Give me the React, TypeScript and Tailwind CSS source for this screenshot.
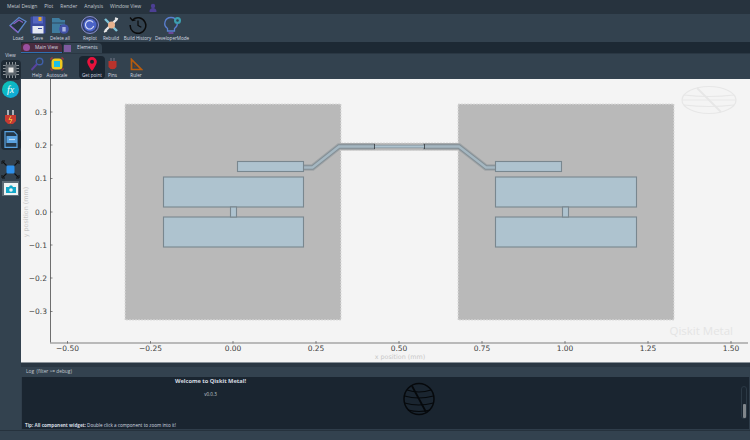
import React from "react";

const Tool = ({ label, children, w, active }: { label: string; children: React.ReactNode; w: string; active?: boolean }) => (
  <div className={`flex flex-col items-center justify-end shrink-0 ${w} ${active ? "bg-[#1a2530] rounded-sm" : ""}`}>
    <div className="flex items-center justify-center">{children}</div>
    <span className="text-[4.6px] leading-[7px] mt-[1px] text-[#d5dbe0] whitespace-nowrap">{label}</span>
  </div>
);

const Plot = () => {
  const xt = [["\u22120.50", 67.5], ["\u22120.25", 150.5], ["0.00", 233], ["0.25", 316], ["0.50", 399], ["0.75", 482], ["1.00", 565], ["1.25", 648], ["1.50", 731]] as const;
  const yt = [["0.3", 112], ["0.2", 145], ["0.1", 178.5], ["0.0", 212], ["\u22120.1", 245], ["\u22120.2", 278], ["\u22120.3", 311.5]] as const;
  const pad = "#aec3cf";
  const edge = "#79878f";
  const cpw = (d: string) => (
    <g fill="none">
      <path d={d} stroke="#a0a4a6" strokeWidth="6.5" />
      <path d={d} stroke="#838f96" strokeWidth="4.5" />
      <path d={d} stroke="#a5b7c1" strokeWidth="2.4" />
    </g>
  );
  return (
    <svg viewBox="21 79 729 283" className="w-full h-full block" style={{ fontFamily: "'DejaVu Sans', sans-serif" }}>
      <rect x="21" y="79" width="729" height="283" fill="#f4f4f4" />
      <g fill="none" stroke="#e7e7e7" strokeWidth="1.2">
        <ellipse cx="709" cy="100" rx="27" ry="13.5" />
        <path d="M684 95q25 3 50 0M682 100h54M684 105q25 3 50 0" />
        <path d="M697 88l24 24" strokeWidth="1.800" />
      </g>
      <rect x="125" y="104" width="216" height="216" fill="#b9b9b9" stroke="#dcdcdc" strokeWidth="1" strokeDasharray="2 1" />
      <rect x="458" y="104" width="216" height="216" fill="#b9b9b9" stroke="#dcdcdc" strokeWidth="1" strokeDasharray="2 1" />
      <rect x="341" y="143" width="117" height="7.500" fill="#b9b9b9" stroke="#cfcfcf" strokeWidth="0.7" strokeDasharray="2 1" />
      {cpw("M304 167.500h8.500L339 146.500h36")}
      {cpw("M495 167.500h-9L459 146.500h-36")}
      <path d="M374.500 146.500h50" stroke="#838f96" strokeWidth="3.600" />
      <path d="M374.500 146.500h50" stroke="#aec3cf" strokeWidth="2.200" />
      <path d="M374.500 144v5M424.500 144v5" stroke="#33393d" strokeWidth="0.800" />
      <g fill={pad} stroke={edge} strokeWidth="1.100">
        <rect x="237.500" y="161.500" width="66" height="10" />
        <rect x="163.500" y="177" width="140" height="30" />
        <rect x="163.500" y="217" width="140" height="30" />
        <rect x="230.500" y="207" width="6" height="10" />
        <rect x="495.500" y="161.500" width="66" height="10" />
        <rect x="495.500" y="177" width="141" height="30" />
        <rect x="495.500" y="217" width="141" height="30" />
        <rect x="562.500" y="207" width="6" height="10" />
      </g>
      <text x="733" y="335" textAnchor="end" fontSize="11.500" fill="#e4e4e4" style={{ fontFamily: "'Open Sans', sans-serif" }}>Qiskit Metal</text>
      <path d="M50.500 79V343" fill="none" stroke="#6e6e6e" strokeWidth="1" />
      <path d="M50 343H748" fill="none" stroke="#a6a6a6" strokeWidth="1.500" />
      {yt.map(([t, y]) => (
        <g key={t}>
          <path d={`M50 ${y}h2.500`} stroke="#555" strokeWidth="0.7" />
          <text x="47" y={y + 2.800} textAnchor="end" fontSize="7.500" fill="#3f3f3f">{t}</text>
        </g>
      ))}
      {xt.map(([t, x]) => (
        <g key={t}>
          <path d={`M${x} 341v2.500`} stroke="#555" strokeWidth="0.7" />
          <text x={x} y="350.500" textAnchor="middle" fontSize="7.500" fill="#3f3f3f">{t}</text>
        </g>
      ))}
      <text x="400" y="358.500" textAnchor="middle" fontSize="6.400" fill="#c8c8c8">x position (mm)</text>
      <text transform="translate(28 212) rotate(-90)" textAnchor="middle" fontSize="6.400" fill="#c8c8c8">y position (mm)</text>
    </svg>
  );
};

const Globe = () => (
  <svg width="32" height="34" viewBox="0 0 32 34" fill="none" stroke="#06090c">
    <ellipse cx="16" cy="17" rx="15" ry="15.500" strokeWidth="1.500" />
    <path d="M4 8q12 4 24 0M1.500 14q14 4 29 0M1.500 21q14 4 29 0M5 28q11 3 22 0" strokeWidth="1.100" />
    <path d="M9 4L23 30" strokeWidth="1.800" />
  </svg>
);

export default function App() {
  return (
    <div className="w-[750px] h-[440px] overflow-hidden flex flex-col bg-[#2f3d4a]" style={{ fontFamily: "'Open Sans', 'Noto Sans', sans-serif" }}>
      {/* menu */}
      <div className="h-[14px] bg-[#27333e] flex items-center pl-[7px] gap-[7px] text-[5px] text-[#c3cad0] shrink-0">
        <span>Metal Design</span>
        <span>Plot</span>
        <span>Render</span>
        <span>Analysis</span>
        <span>Window View</span>
        <svg width="8" height="9" viewBox="0 0 8 9" className="ml-[1px]">
          <circle cx="4" cy="3" r="2.200" fill="#4c3f93" />
          <path d="M0.500 9c0-3 1.500-4 3.500-4s3.500 1 3.500 4z" fill="#4c3f93" />
        </svg>
      </div>
      {/* main toolbar */}
      <div className="h-[28px] bg-[#33424f] flex items-end pl-[8px] shrink-0">
        <Tool label="Load" w="w-[20px]">
          <svg width="18" height="18" viewBox="0 0 18 18" fill="none" stroke="#5b86c9" strokeWidth="1.300">
            <path d="M1 9.500L10 1.500l7 4-8 11z" fill="#26333f" />
            <path d="M4.500 8L10 4l4 2.500" stroke="#8a5fc0" />
            <path d="M1 9.500l8 7" stroke="#8a5fc0" />
          </svg>
        </Tool>
        <Tool label="Save" w="w-[20px]">
          <svg width="16" height="18" viewBox="0 0 16 18">
            <rect x="0.500" y="0.500" width="15" height="17" rx="1" fill="#3a4a9e" />
            <rect x="3" y="0.500" width="10" height="7" fill="#5566c0" />
            <rect x="8.500" y="1" width="3" height="4" fill="#e0a52e" />
            <rect x="2.500" y="10" width="11" height="7.500" fill="#e4e8f2" />
            <rect x="8" y="12" width="4" height="1" fill="#3a4a9e" />
          </svg>
        </Tool>
        <Tool label="Delete all" w="w-[24px]">
          <svg width="18" height="18" viewBox="0 0 18 18">
            <path d="M1 2h7l2 2h4v5H9v8H1z" fill="#3f7c9f" />
            <path d="M1 7h13" stroke="#223" strokeWidth="0.600" />
            <circle cx="13" cy="13" r="4.800" fill="#4253a8" />
            <rect x="11.300" y="11" width="3.400" height="4.500" fill="#aab4e0" />
          </svg>
        </Tool>
        <div className="w-[7px]" />
        <Tool label="Replot" w="w-[22px]">
          <svg width="18" height="18" viewBox="0 0 18 18" fill="none">
            <circle cx="9" cy="9" r="8.500" fill="#2f3d6a" stroke="#8b8fc9" strokeWidth="1" />
            <circle cx="9" cy="9" r="6.500" fill="#4a63c8" />
            <path d="M12.200 6.500a4.200 4.200 0 1 0 .5 3.500" stroke="#d6dcf5" strokeWidth="1.100" />
          </svg>
        </Tool>
        <Tool label="Rebuild" w="w-[20px]">
          <svg width="17" height="18" viewBox="0 0 17 18" fill="none">
            <path d="M2 15L14 3" stroke="#e8e8e8" strokeWidth="2.400" />
            <path d="M2 3l12 12" stroke="#7fc4d8" strokeWidth="2.400" />
            <circle cx="8.500" cy="9" r="3.500" fill="#e7b28e" />
            <path d="M1 16l3-1.500M12 2l3 1" stroke="#e8e8e8" strokeWidth="1.400" />
          </svg>
        </Tool>
        <Tool label="Build History" w="w-[33px]">
          <svg width="18" height="18" viewBox="0 0 18 18" fill="none" stroke="#0b0b0b" strokeWidth="1.500">
            <path d="M3.500 4A7.800 7.800 0 1 1 1.200 9" />
            <path d="M1 1.500L3.500 4.500l3-.5" strokeWidth="1.200" />
            <path d="M9 4.500v5l3.300 1.800" strokeWidth="1.200" />
          </svg>
        </Tool>
        <div className="w-[1px]" />
        <Tool label="DeveloperMode" w="w-[34px]">
          <svg width="20" height="18" viewBox="0 0 20 18" fill="none">
            <path d="M9 1.500a6 6 0 0 0-3.500 11v2.500h7v-2.500A6 6 0 0 0 9 1.500z" stroke="#5a7fd0" strokeWidth="1.300" />
            <path d="M6.500 17h5" stroke="#8a4fc0" strokeWidth="1.300" />
            <circle cx="15.500" cy="4.500" r="3.500" fill="#3d9fb0" />
            <circle cx="15.500" cy="4.500" r="1.300" fill="#33424f" />
          </svg>
        </Tool>
      </div>
      {/* body */}
      <div className="flex-1 flex min-h-0">
        {/* left rail */}
        <div className="w-[21px] shrink-0 flex flex-col items-center bg-[#33424f]">
          <div className="h-[10px] shrink-0" />
          <span className="text-[4.8px] leading-[7px] text-[#d5dbe0]">View</span>
          <div className="w-[20px] h-[20px] mt-[1px] rounded-sm bg-[#1f2b36] flex items-center justify-center shrink-0">
            <svg width="18" height="18" viewBox="0 0 18 18">
              <path d="M1 4.500h16M1 7.500h16M1 10.500h16M1 13.500h16M4.500 1v16M7.500 1v16M10.500 1v16M13.500 1v16" stroke="#8d949a" strokeWidth="1" />
              <rect x="3.500" y="3.500" width="11" height="11" fill="#5d666e" />
              <rect x="6.500" y="6.500" width="5" height="5" fill="#e6e6e6" />
            </svg>
          </div>
          <div className="w-[17px] h-[17px] mt-[1px] shrink-0 rounded-full bg-gradient-to-br from-[#12c7b0] to-[#16a2e0] flex items-center justify-center text-white italic text-[10px] leading-none" style={{ fontFamily: "'Liberation Serif', serif" }}>fx</div>
          <div className="mt-[12px] h-[17px] flex items-center shrink-0">
            <svg width="13" height="17" viewBox="0 0 13 17">
              <path d="M4 0v5M9 0v5" stroke="#c9ced2" strokeWidth="1.600" />
              <path d="M1 5h11v6l-3 3H4l-3-3z" fill="#c53a32" />
              <path d="M7 6L5 9.500h3L6 13" stroke="#f4c33c" strokeWidth="0.900" fill="none" />
              <path d="M6.500 14v3" stroke="#444" strokeWidth="1.500" />
            </svg>
          </div>
          <div className="w-[20px] h-[21px] mt-[2px] bg-[#1f2b36] rounded-sm flex items-center justify-center shrink-0">
            <svg width="14" height="17" viewBox="0 0 14 17">
              <path d="M1 .7h9l3 3v12.600H1z" fill="#24384a" stroke="#5aa2e0" strokeWidth="1.200" />
              <rect x="2.500" y="5" width="10.500" height="7" fill="#5aa2e0" />
              <path d="M5 8.500h6" stroke="#bcdcf5" strokeWidth="1.200" />
            </svg>
          </div>
          <div className="mt-[10px] h-[18px] flex items-center shrink-0">
            <svg width="19" height="19" viewBox="0 0 19 19">
              <path d="M2 2l15 15M17 2L2 17" stroke="#111" strokeWidth="1.100" />
              <rect x="5.500" y="5.500" width="8" height="8" fill="#2f90ea" />
              <path d="M1 1h3M1 1v3M18 1h-3M18 1v3M1 18h3M1 18v-3M18 18h-3M18 18v-3" stroke="#111" strokeWidth="1" />
            </svg>
          </div>
          <div className="mt-[3px] w-[17px] h-[15px] bg-[#5d6b76] flex items-center justify-center shrink-0">
            <svg width="14" height="12" viewBox="0 0 14 12">
              <rect width="14" height="12" fill="#eef2f3" />
              <path d="M2 4h3l1-1.500h2L9 4h3v6H2z" fill="#12a7c9" />
              <circle cx="7" cy="7" r="1.800" fill="#eef2f3" />
            </svg>
          </div>
        </div>
        {/* right */}
        <div className="flex-1 min-w-0 flex flex-col">
          {/* tabs */}
          <div className="h-[11px] bg-[#1d2934] flex items-end shrink-0">
            <div className="h-[10px] w-[41px] bg-[#4a2c3e] border-b border-[#2f6fb0] flex items-center gap-[5px] pl-[2px] rounded-t-sm">
              <span className="w-[7px] h-[7px] rounded-sm bg-[#9a4f9f] shrink-0" />
              <span className="text-[4.8px] text-[#d5dbe0] whitespace-nowrap">Main View</span>
            </div>
            <div className="h-[10px] w-[39px] ml-[1px] bg-[#33424f] flex items-center gap-[6px] pl-[1px] rounded-t-sm">
              <span className="w-[7px] h-[7px] bg-[#7d5a9f] shrink-0" />
              <span className="text-[4.8px] text-[#d5dbe0] whitespace-nowrap">Elements</span>
            </div>
          </div>
          {/* plot toolbar */}
          <div className="h-[26px] bg-[#33424f] flex items-end pl-[6px] shrink-0 border-t border-[#2a3743]">
            <Tool label="Help" w="w-[20px]">
              <svg width="14" height="14" viewBox="0 0 14 14" fill="none">
                <circle cx="9.500" cy="4.500" r="3.300" stroke="#3f5fa8" strokeWidth="1.400" />
                <path d="M7 7L1.500 13" stroke="#5a44a0" strokeWidth="1.900" />
              </svg>
            </Tool>
            <Tool label="Autoscale" w="w-[20px]">
              <svg width="14" height="14" viewBox="0 0 14 14">
                <rect x="1.500" y="1.500" width="11" height="11" rx="3.500" fill="#f0c91f" />
                <rect x="4" y="4" width="6" height="6" fill="#1cbfe8" />
                <path d="M0 2h2V0M14 2h-2V0M0 12h2v2M14 12h-2v2" stroke="#cf3a3a" strokeWidth="0.800" fill="none" />
              </svg>
            </Tool>
            <div className="w-[12px]" />
            <Tool label="Get point" w="w-[26px] h-[23px]" active>
              <svg width="10" height="14" viewBox="0 0 10 14">
                <path d="M5 0a4.800 4.800 0 0 0-4.800 4.800C.200 8 5 14 5 14s4.800-6 4.800-9.200A4.800 4.800 0 0 0 5 0z" fill="#e8123c" />
                <circle cx="5" cy="4.800" r="2" fill="#1a2530" />
              </svg>
            </Tool>
            <Tool label="Pins" w="w-[15px]">
              <svg width="9" height="13" viewBox="0 0 9 13">
                <path d="M3 0v3M6 0v3" stroke="#778" strokeWidth="1" />
                <path d="M.5 3h8v6l-2 2h-4l-2-2z" fill="#b8332c" />
                <path d="M4.500 11v2" stroke="#444" />
              </svg>
            </Tool>
            <div className="w-[6px]" />
            <Tool label="Ruler" w="w-[20px]">
              <svg width="13" height="13" viewBox="0 0 13 13" fill="none">
                <path d="M1.500 1.500v10h10z" stroke="#b85c0e" strokeWidth="1.700" />
                <path d="M4 6.500v2.500h2.500z" fill="#7a3d10" />
              </svg>
            </Tool>
          </div>
          {/* plot */}
          <div className="h-[283px] shrink-0"><Plot /></div>
          {/* splitter */}
          <div className="h-[5px] bg-[#2a3743] border-t border-[#8a9299] shrink-0" />
          {/* log header */}
          <div className="h-[10px] bg-[#33424f] flex items-center pl-[5px] shrink-0">
            <span className="text-[4.8px] text-[#c3cad0]">Log&nbsp;&nbsp;(filter &gt;= debug)</span>
          </div>
          {/* log */}
          <div className="h-[52px] bg-[#1a2530] relative flex shrink-0 ml-[1px] mr-[1px]">
            <div className="absolute left-[137px] top-[0px] w-[103px] text-center text-[5.7px] leading-[8px] font-bold text-[#d5dbe0]">Welcome to Qiskit Metal!</div>
            <div className="absolute left-[137px] top-[14px] w-[103px] text-center text-[4.6px] leading-[6px] text-[#c3cad0]">v0.0.3</div>
            <div className="absolute left-[381px] top-[5px]"><Globe /></div>
            <div className="absolute left-[3px] bottom-[1px] text-[4.6px] leading-[6px] text-[#d5dbe0] whitespace-nowrap"><b>Tip: All component widget:</b> Double click a component to zoom into it!</div>
            <div className="absolute right-[2px] top-[9px] w-[6px] h-[33px] rounded-[3px] border border-[#2b3945]">
              <div className="absolute left-[1px] top-[17px] w-[3px] h-[14px] bg-[#80868b] rounded-[1px]" />
            </div>
          </div>
        </div>
      </div>
      {/* status */}
      <div className="h-[10px] bg-[#33424f] border-t border-[#26323d] shrink-0" />
    </div>
  );
}
